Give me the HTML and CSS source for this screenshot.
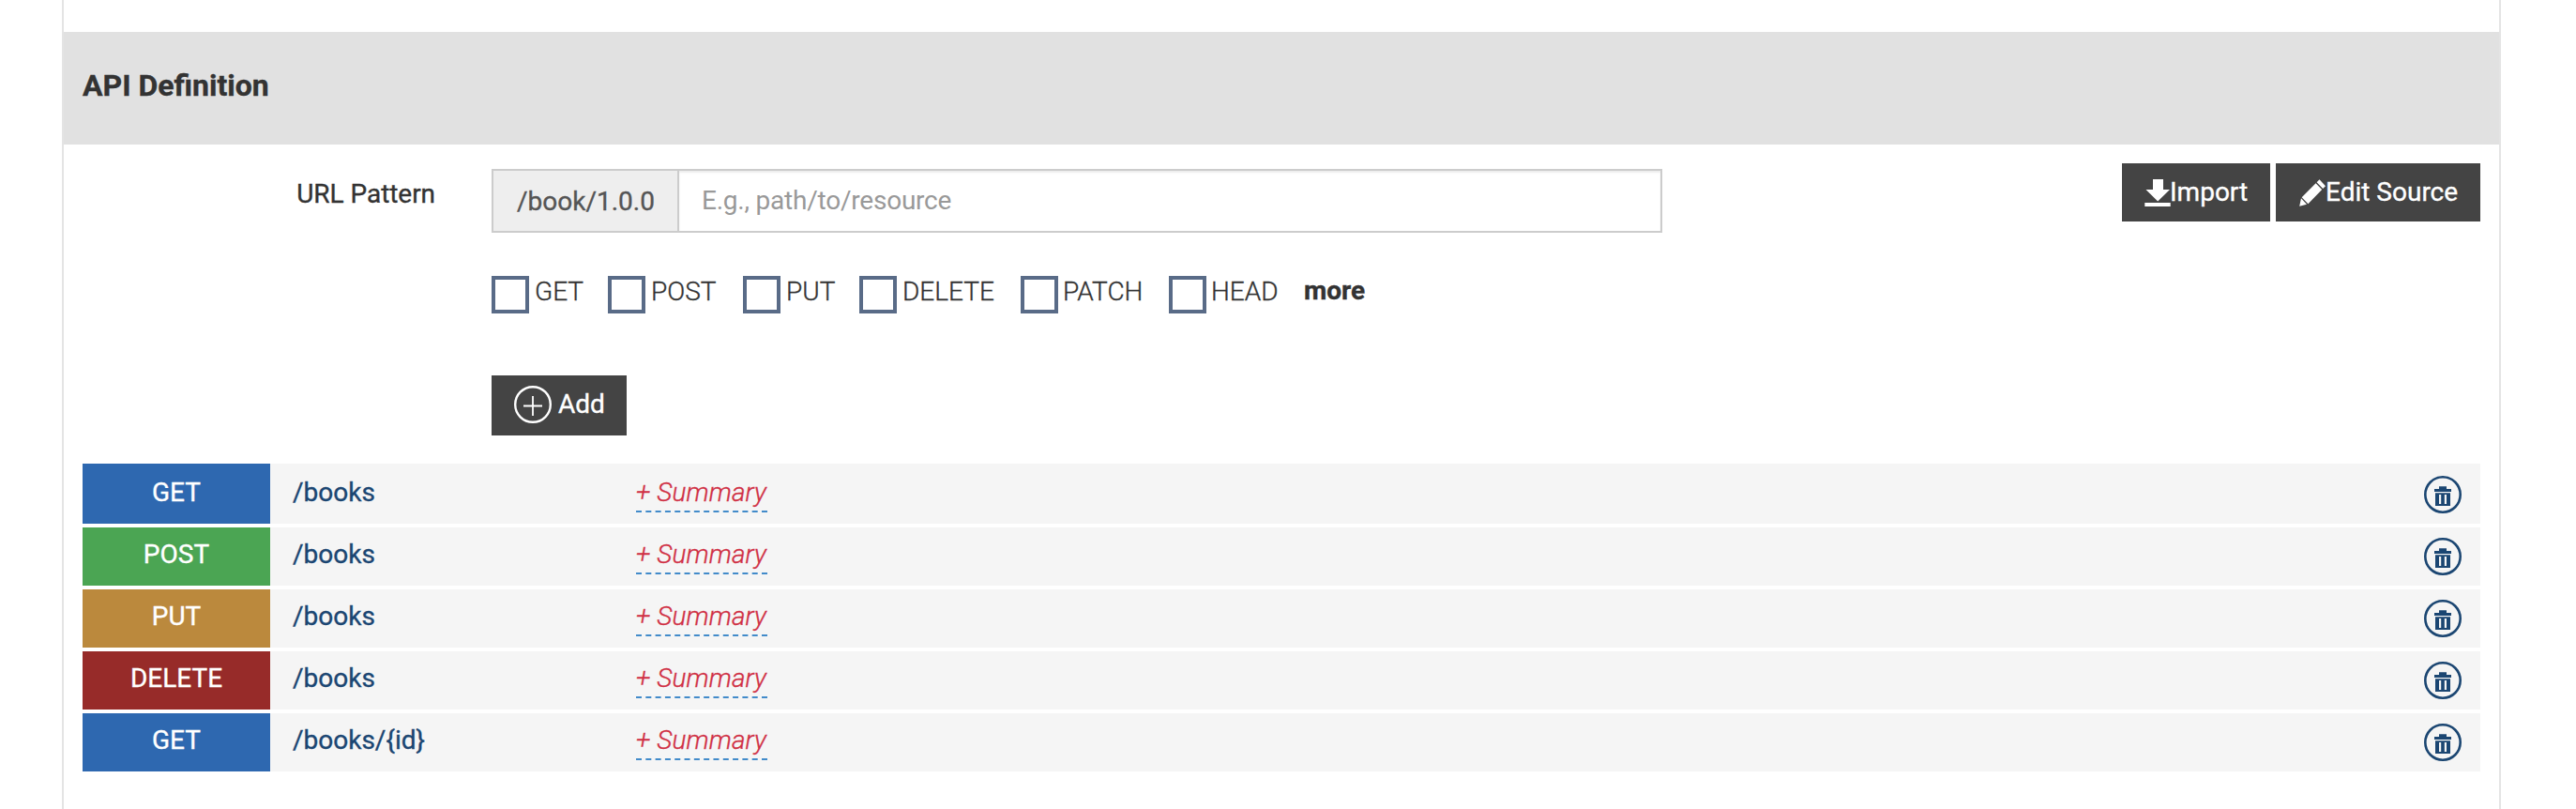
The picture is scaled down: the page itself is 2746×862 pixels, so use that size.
FILE: index.html
```html
<!DOCTYPE html>
<html lang="en">
<head>
<meta charset="utf-8">
<title>API Definition</title>
<link rel="stylesheet" href="styles.css">
</head>
<body>
<svg class="sprite" aria-hidden="true">
  <symbol id="trash" viewBox="0 0 40 40">
    <circle cx="20" cy="20" r="18.7" fill="none" stroke="currentColor" stroke-width="2.6"/>
    <path fill="currentColor" fill-rule="evenodd" d="M16 11.2h8v2.8h5v3H11v-3h5zM12 18.2h16V32H12zM16 20v10h2.2V20zM21.8 20v10H24V20z"/>
  </symbol>
</svg>
<main class="panel">
  <header class="panel-head"><h1>API Definition</h1></header>
  <section class="designer">
    <form class="resource-form">
      <label class="form-label" for="pattern">URL Pattern</label>
      <div class="form-fields">
        <div class="input-group">
          <span class="addon">/book/1.0.0</span>
          <input id="pattern" class="pattern" type="text" placeholder="E.g., path/to/resource">
        </div>
        <div class="verbs">
          <label class="verb verb-get"><span class="box"></span>GET</label>
          <label class="verb verb-post"><span class="box"></span>POST</label>
          <label class="verb verb-put"><span class="box"></span>PUT</label>
          <label class="verb verb-delete"><span class="box"></span>DELETE</label>
          <label class="verb verb-patch"><span class="box"></span>PATCH</label>
          <label class="verb verb-head"><span class="box"></span>HEAD</label>
          <a class="more">more</a>
        </div>
        <button class="btn btn-add" type="button">
          <svg class="icon-add" viewBox="0 0 40 40"><circle cx="20" cy="20" r="18.8" fill="none" stroke="#fff" stroke-width="2.4"/><path d="M20 11v21M10 21.5h20" stroke="#fff" stroke-width="1.8" fill="none"/></svg>
          <span>Add</span>
        </button>
      </div>
      <div class="actions">
        <button class="btn btn-import" type="button">
          <svg class="icon" viewBox="0 0 28 29"><path fill="#fff" d="M9 0h11v11h7L14.2 23.5 1.5 11H9zM.3 25h27.4v4H.3z"/></svg>
          <span>Import</span>
        </button>
        <button class="btn btn-edit" type="button">
          <svg class="icon" viewBox="0 0 28 29"><path fill="#fff" d="M21.5.3 28 7.2l-2.8 2.9-6.6-6.9zM17.6 4.2l6.6 6.9L9.4 26.2l-6.7-7zM2 20.3l6 6.4L.2 28.8z"/></svg>
          <span>Edit Source</span>
        </button>
      </div>
    </form>
    <ul class="resources">
      <li class="resource"><span class="badge get">GET</span><span class="path">/books</span><span class="summary">+ Summary</span><svg class="trash"><use href="#trash"/></svg></li>
      <li class="resource"><span class="badge post">POST</span><span class="path">/books</span><span class="summary">+ Summary</span><svg class="trash"><use href="#trash"/></svg></li>
      <li class="resource"><span class="badge put">PUT</span><span class="path">/books</span><span class="summary">+ Summary</span><svg class="trash"><use href="#trash"/></svg></li>
      <li class="resource"><span class="badge delete">DELETE</span><span class="path">/books</span><span class="summary">+ Summary</span><svg class="trash"><use href="#trash"/></svg></li>
      <li class="resource"><span class="badge get">GET</span><span class="path">/books/{id}</span><span class="summary">+ Summary</span><svg class="trash"><use href="#trash"/></svg></li>
    </ul>
  </section>
</main>
</body>
</html>
```
FILE: styles.css
```css
* { box-sizing: border-box; }

body {
  margin: 0;
  background: #fff;
  color: #333;
  font: 400 28px/40px Roboto, sans-serif;
  -webkit-text-stroke: .35px currentColor;
}

.sprite { display: none; }

.panel {
  width: 2600px;
  height: 862px;
  margin-left: 66px;
  padding-top: 34px;
  border: solid #e4e4e4;
  border-width: 0 2px;
}

.panel-head {
  height: 120px;
  padding: 36px 20px 0;
  background: #e1e1e1;
}

h1 {
  margin: 0;
  font-size: 32px;
  line-height: 42px;
  font-weight: 700;
}

.designer { padding: 0 20px; }

.resource-form {
  display: flex;
  height: 340px;
}

.form-label {
  width: 436px;
  padding: 33px 60px 0 0;
  letter-spacing: -.05px;
  text-align: right;
}

.form-fields {
  width: 1248px;
  padding-top: 26px;
}

.input-group {
  display: flex;
  height: 68px;
}

.addon {
  width: 198px;
  padding-left: 25px;
  border: 2px solid #ccc;
  border-right: 0;
  background: #eee;
  color: #555;
  line-height: 65px;
}

.pattern {
  flex: 1;
  min-width: 0;
  padding: 0 24px 1px;
  border: 2px solid #ccc;
  border-radius: 0;
  outline: 0;
  background: #fff;
  box-shadow: inset 0 2px 2px rgba(0, 0, 0, .075);
  font: inherit;
  letter-spacing: -.22px;
}

.pattern::placeholder {
  color: #999;
  opacity: 1;
  -webkit-text-stroke: 0;
}

.verbs {
  display: flex;
  height: 106px;
  margin-top: 46px;
  font-weight: 300;
  line-height: 33px;
}

.verb { display: flex; gap: 6px; white-space: nowrap; }
.verb-get, .verb-put { width: 124px; }
.verb-post { width: 144px; }
.verb-delete { width: 172px; }
.verb-patch { width: 158px; }
.verb-head { width: 144px; }
.verb-patch, .verb-head { gap: 5px; }

.box {
  flex: none;
  width: 40px;
  height: 40px;
  border: 4px solid #596b87;
}

.more { font-weight: 700; line-height: 31px; }

.btn {
  display: flex;
  align-items: flex-start;
  padding: 0;
  border: 0;
  border-radius: 0;
  background: #444;
  color: #fff;
  font: inherit;
  white-space: nowrap;
}

.btn-add {
  width: 144px;
  height: 64px;
  padding: 11px 0 0 24px;
  gap: 7px;
}

.btn-add span { line-height: 39px; }

.icon-add { width: 40px; height: 40px; }

.actions {
  display: flex;
  gap: 6px;
  margin-left: auto;
  padding-top: 20px;
}

.actions .btn { height: 62px; padding-top: 17px; }
.actions .btn span { line-height: 27px; }
.btn-import { width: 158px; padding-left: 24px; }
.btn-edit { width: 218px; padding-left: 25px; }
.btn-import span { margin-left: -1px; }
.icon { width: 28px; height: 29px; }

.resources {
  display: grid;
  gap: 4px;
  margin: 0;
  padding: 0;
  list-style: none;
}

.resource {
  display: grid;
  grid-template-columns: 200px 390px 140px auto;
  height: 62px;
  background: #f5f5f5;
  line-height: 57px;
}

.resource:first-child { height: 64px; line-height: 61px; }

.badge { color: #fff; text-align: center; }
.get { background: #2e68b0; }
.post { background: #4ba553; }
.put { background: #bb893d; }
.delete { background: #972b29; }

.path { padding-left: 24px; color: #1b4672; }

.summary {
  height: 50px;
  border-bottom: 2px dashed #428bca;
  color: #d02f44;
  font-style: italic;
  font-weight: 300;
  letter-spacing: .1px;
  white-space: nowrap;
}

.resource:first-child .summary { height: 52px; }

.trash {
  width: 40px;
  height: 40px;
  margin: 11px 20px 0 0;
  justify-self: end;
  color: #1b4672;
}

.resource:first-child .trash { margin-top: 13px; }
```
